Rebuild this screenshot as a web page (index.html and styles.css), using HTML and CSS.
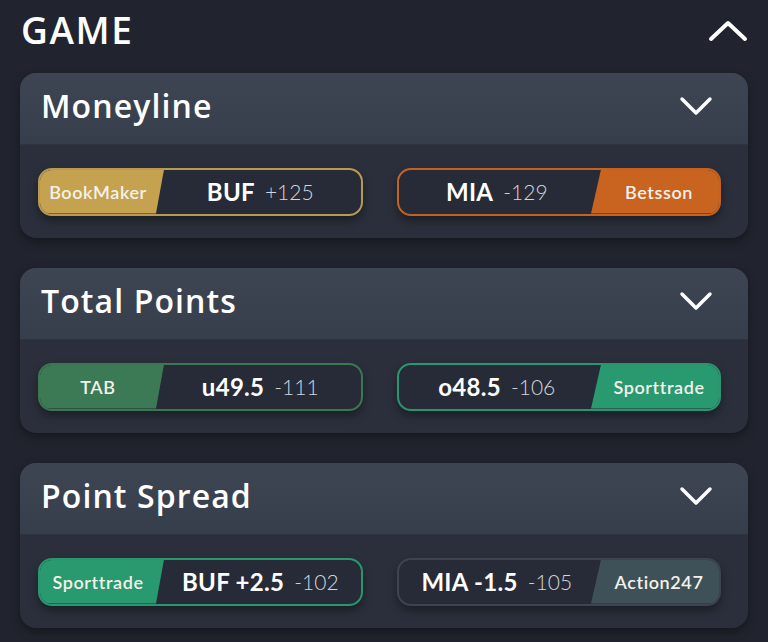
FILE: index.html
```html
<!DOCTYPE html>
<html lang="en">
<head>
    <meta charset="UTF-8">
    <meta name="viewport" content="width=device-width, initial-scale=1.0">
    <title>Game odds</title>
    <link rel="stylesheet" href="styles.css">
</head>
<body>
    <div class="section-head">
        <h1>GAME</h1>
        <svg class="chev-up" width="40" height="22" viewBox="0 0 40 22"><path d="M3 19 L20 3 L37 19" fill="none" stroke="#fff" stroke-width="4" stroke-linecap="round" stroke-linejoin="round"/></svg>
    </div>

    <div class="market">
        <div class="market-head">
            <h2>Moneyline</h2>
            <svg class="chev-down" width="34" height="20" viewBox="0 0 34 20"><path d="M3 3 L17 17 L31 3" fill="none" stroke="#fff" stroke-width="3.5" stroke-linecap="round" stroke-linejoin="round"/></svg>
        </div>
        <div class="market-body">
            <div class="pill pill-gold">
                <div class="book book-left">BookMaker</div>
                <div class="line"><b>BUF</b><span>+125</span></div>
            </div>
            <div class="pill pill-orange">
                <div class="line"><b>MIA</b><span>-129</span></div>
                <div class="book book-right">Betsson</div>
            </div>
        </div>
    </div>

    <div class="market">
        <div class="market-head">
            <h2>Total Points</h2>
            <svg class="chev-down" width="34" height="20" viewBox="0 0 34 20"><path d="M3 3 L17 17 L31 3" fill="none" stroke="#fff" stroke-width="3.5" stroke-linecap="round" stroke-linejoin="round"/></svg>
        </div>
        <div class="market-body">
            <div class="pill pill-tab">
                <div class="book book-left">TAB</div>
                <div class="line"><b>u49.5</b><span>-111</span></div>
            </div>
            <div class="pill pill-sport">
                <div class="line"><b>o48.5</b><span>-106</span></div>
                <div class="book book-right">Sporttrade</div>
            </div>
        </div>
    </div>

    <div class="market">
        <div class="market-head">
            <h2>Point Spread</h2>
            <svg class="chev-down" width="34" height="20" viewBox="0 0 34 20"><path d="M3 3 L17 17 L31 3" fill="none" stroke="#fff" stroke-width="3.5" stroke-linecap="round" stroke-linejoin="round"/></svg>
        </div>
        <div class="market-body">
            <div class="pill pill-sport">
                <div class="book book-left">Sporttrade</div>
                <div class="line"><b>BUF +2.5</b><span>-102</span></div>
            </div>
            <div class="pill pill-action">
                <div class="line"><b>MIA -1.5</b><span>-105</span></div>
                <div class="book book-right">Action247</div>
            </div>
        </div>
    </div>
</body>
</html>
```

FILE: styles.css
```css
body {
    font-family: 'Lato', 'Noto Sans', sans-serif;
    background-color: #21242e;
    color: #fff;
    margin: 0;
    padding: 0 20px;
    height: 642px;
    overflow: hidden;
}

.section-head {
    display: flex;
    justify-content: space-between;
    align-items: center;
    height: 73px;
    padding-left: 1px;
    box-sizing: border-box;
    padding-bottom: 14px;
}

h1 {
    margin: 0;
    font-family: 'Open Sans', 'Lato', sans-serif;
    font-size: 37px;
    font-weight: 600;
    letter-spacing: 1.6px;
}

.chev-up {
    margin-top: 2px;
}

.market {
    background-color: #2a2f3b;
    border-radius: 16px;
    overflow: hidden;
    margin-bottom: 30px;
    box-shadow: 0 4px 10px rgba(0, 0, 0, 0.35);
}

.market-head {
    height: 72px;
    display: flex;
    justify-content: space-between;
    align-items: center;
    padding: 0 35px 0 21px;
    background: linear-gradient(#3d4553, #373e4b);
    box-shadow: inset 0 -1px 0 rgba(0, 0, 0, 0.15);
}

h2 {
    margin: 0;
    font-family: 'Open Sans', 'Lato', sans-serif;
    font-size: 32px;
    font-weight: 600;
    letter-spacing: 1.1px;
    padding-bottom: 8px;
}

.chev-down {
    margin-bottom: 6px;
}

.market-body {
    height: 93px;
    display: flex;
    align-items: center;
    gap: 34px;
    padding: 0 27px 0 18px;
}

.pill {
    flex: 1;
    height: 48px;
    display: flex;
    border: 2px solid;
    border-radius: 14px;
    overflow: hidden;
    background-color: #262b37;
    box-sizing: border-box;
    box-shadow: 0 5px 8px rgba(0, 0, 0, 0.35);
}

.book {
    width: 116px;
    display: flex;
    align-items: center;
    justify-content: center;
    font-size: 18px;
    font-weight: 600;
    letter-spacing: 0.6px;
    color: #f4f1ea;
    flex-shrink: 0;
}

.book-left {
    clip-path: polygon(0 0, 100% 0, calc(100% - 8px) 100%, 0 100%);
    padding-right: 8px;
    margin-right: -4px;
}

.book-right {
    clip-path: polygon(10px 0, 100% 0, 100% 100%, 0 100%);
    padding-left: 8px;
    margin-left: -4px;
    width: 120px;
}

.line {
    flex: 1;
    display: flex;
    align-items: center;
    justify-content: center;
    gap: 10px;
}

.line b {
    font-size: 24px;
    font-weight: 700;
    letter-spacing: 0.3px;
}

.line span {
    font-size: 21px;
    font-weight: 300;
    color: #d3d6dc;
}

.pill-gold { border-color: #b89a52; }
.pill-gold .book { background-color: #c4a24f; }

.pill-orange { border-color: #c6621f; }
.pill-orange .book { background-color: #c8641f; }

.pill-tab { border-color: #3d7653; }
.pill-tab .book { background-color: #3b7a55; }

.pill-sport { border-color: #2a9670; }
.pill-sport .book { background-color: #29996f; }

.pill-action { border-color: #3c4452; }
.pill-action .book { background-color: #3e5159; }
```
